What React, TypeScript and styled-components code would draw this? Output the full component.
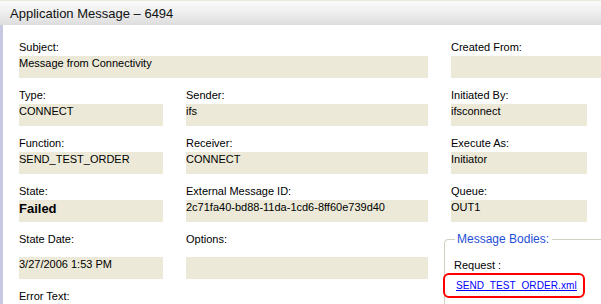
import * as React from "react";
import styled, { createGlobalStyle } from "styled-components";

const GlobalStyle = createGlobalStyle`
  html, body {
    margin: 0;
    padding: 0;
    background: #ffffff;
    overflow: hidden;
  }
  body {
    font-family: "Liberation Sans", Arial, sans-serif;
    font-size: 11px;
    color: #000;
  }
`;

const Window = styled.div`
  width: 601px;
  height: 304px;
  overflow: hidden;
  border-top: 1px solid #ece9d8;
  box-sizing: border-box;
`;

const TitleBar = styled.div`
  height: 24px;
  display: flex;
  align-items: center;
  padding-left: 10px;
  font-size: 13px;
  color: #111;
  background: linear-gradient(#fbfbfb, #f1f1f1 40%, #dddddd);
`;

const Body = styled.div`
  border-left: 3px solid #c6c9e1;
  height: 279px;
  padding: 15px 14px 0 16px;
  box-sizing: border-box;
`;

const FormGrid = styled.div`
  display: grid;
  grid-template-columns: 144px 242px 136px;
  grid-template-rows: 38px 38px 38px 38px 47px 14px;
  column-gap: 23px;
  row-gap: 10px;
  align-items: start;
`;

const Field = styled.div<{ $span?: number; $bleed?: boolean }>`
  grid-column: span ${(p) => p.$span ?? 1};
  margin-right: ${(p) => (p.$bleed ? "-14px" : "0")};
  display: flex;
  flex-direction: column;
`;

const Label = styled.div<{ $tall?: boolean }>`
  line-height: 14px;
  height: ${(p) => (p.$tall ? "25px" : "16px")};
`;

const Value = styled.div<{ $strong?: boolean }>`
  height: 22px;
  background: #ece9d8;
  line-height: ${(p) => (p.$strong ? "17px" : "14px")};
  font-size: ${(p) => (p.$strong ? "13px" : "11px")};
  font-weight: ${(p) => (p.$strong ? "bold" : "normal")};
  white-space: nowrap;
  overflow: hidden;
`;

const Bodies = styled.fieldset`
  grid-column: 3;
  grid-row: 5 / span 2;
  margin: 0 -30px 0 -7px;
  padding: 6px 9px 20px 9px;
  border: 1px solid #d0d0bf;
  border-radius: 4px 0 0 0;
  min-width: 0;
`;

const Legend = styled.legend`
  color: #1f4fd6;
  font-size: 12px;
  line-height: 14px;
  padding: 0 3px 0 2px;
  margin-left: 1px;
`;

const RequestLabel = styled.div`
  font-size: 11px;
  line-height: 14px;
  margin-top: 6px;
`;

const Highlight = styled.div`
  display: inline-block;
  margin: 1px 0 0 -11px;
  padding: 4px 6px 3px 11px;
  border: 2px solid #ff0000;
  border-radius: 6px;
  background: #fff;
`;

const FileLink = styled.a`
  color: #0000ff;
  font-size: 10px;
  line-height: 14px;
  letter-spacing: 0.1px;
  text-decoration: underline;
`;

const ErrorField = styled(Field)`
  grid-column: 1;
  grid-row: 6;
`;

type Row = {
  label: string;
  value?: string;
  span?: number;
  bleed?: boolean;
  strong?: boolean;
  tall?: boolean;
};

const fields: Row[] = [
  { label: "Subject:", value: "Message from Connectivity", span: 2 },
  { label: "Created From:", value: "", bleed: true },
  { label: "Type:", value: "CONNECT" },
  { label: "Sender:", value: "ifs" },
  { label: "Initiated By:", value: "ifsconnect" },
  { label: "Function:", value: "SEND_TEST_ORDER" },
  { label: "Receiver:", value: "CONNECT" },
  { label: "Execute As:", value: "Initiator" },
  { label: "State:", value: "Failed", strong: true },
  { label: "External Message ID:", value: "2c71fa40-bd88-11da-1cd6-8ff60e739d40" },
  { label: "Queue:", value: "OUT1" },
  { label: "State Date:", value: "3/27/2006 1:53 PM", tall: true },
  { label: "Options:", value: "", tall: true },
];

export default function App() {
  return (
    <>
      <GlobalStyle />
      <Window>
        <TitleBar>Application Message – 6494</TitleBar>
        <Body>
          <FormGrid>
            {fields.map((f, i) => (
              <Field key={i} $span={f.span} $bleed={f.bleed}>
                <Label $tall={f.tall}>{f.label}</Label>
                <Value $strong={f.strong}>{f.value}</Value>
              </Field>
            ))}
            <Bodies>
              <Legend>Message Bodies:</Legend>
              <RequestLabel>Request :</RequestLabel>
              <Highlight>
                <FileLink href="#">SEND_TEST_ORDER.xml</FileLink>
              </Highlight>
            </Bodies>
            <ErrorField>
              <Label>Error Text:</Label>
            </ErrorField>
          </FormGrid>
        </Body>
      </Window>
    </>
  );
}
